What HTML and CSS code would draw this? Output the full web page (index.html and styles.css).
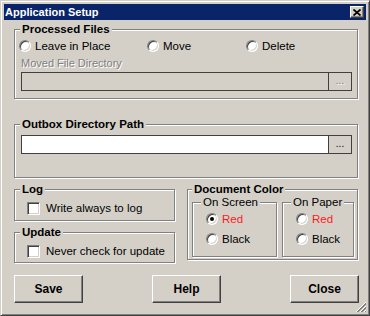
FILE: index.html
```html
<!DOCTYPE html>
<html lang="en">
<head>
<meta charset="UTF-8" />
<title>Application Setup</title>
<link rel="stylesheet" href="styles.css">
</head>
<body>
<div class="window">
  <div class="titlebar">
    <span class="title">Application Setup</span>
    <span class="close-btn">
      <svg width="8" height="7" viewBox="0 0 8 7"><path d="M0.5 0.5L7.5 6.5M7.5 0.5L0.5 6.5" stroke="#000" stroke-width="1.7" fill="none"/></svg>
    </span>
  </div>

  <div class="content">
    <fieldset class="group group-files">
      <legend>Processed Files</legend>
      <div class="radio-row">
        <label class="opt opt-leave"><span class="radio"></span>Leave in Place</label>
        <label class="opt opt-move"><span class="radio"></span>Move</label>
        <label class="opt"><span class="radio"></span>Delete</label>
      </div>
      <div class="field-label disabled">Moved File Directory</div>
      <div class="path-box is-disabled">
        <span class="path-input"></span>
        <span class="browse">...</span>
      </div>
    </fieldset>

    <fieldset class="group group-outbox">
      <legend>Outbox Directory Path</legend>
      <div class="path-box">
        <span class="path-input"></span>
        <span class="browse">...</span>
      </div>
    </fieldset>

    <div class="lower">
      <div class="col-left">
        <fieldset class="group group-check">
          <legend>Log</legend>
          <label class="check-row"><span class="checkbox"></span>Write always to log</label>
        </fieldset>
        <fieldset class="group group-check group-update">
          <legend>Update</legend>
          <label class="check-row"><span class="checkbox"></span>Never check for update</label>
        </fieldset>
      </div>

      <fieldset class="group group-color">
        <legend>Document Color</legend>
        <div class="color-sets">
          <fieldset class="sub sub-screen">
            <legend>On Screen</legend>
            <label class="opt"><span class="radio checked"></span><span class="red">Red</span></label>
            <label class="opt"><span class="radio"></span>Black</label>
          </fieldset>
          <fieldset class="sub sub-paper">
            <legend>On Paper</legend>
            <label class="opt"><span class="radio"></span><span class="red">Red</span></label>
            <label class="opt"><span class="radio"></span>Black</label>
          </fieldset>
        </div>
      </fieldset>
    </div>

    <div class="buttons">
      <button class="btn">Save</button>
      <button class="btn">Help</button>
      <button class="btn">Close</button>
    </div>
  </div>

  <svg class="grip" width="12" height="12" viewBox="0 0 12 12">
    <path d="M11 1L1 11M11 5L5 11M11 9L9 11" stroke="#fff" stroke-width="1" fill="none"/>
    <path d="M11 2L2 11M11 3L3 11M11 6L6 11M11 7L7 11M11 10L10 11" stroke="#808080" stroke-width="1" fill="none"/>
  </svg>
</div>
</body>
</html>
```

FILE: styles.css
```css
* {
  box-sizing: border-box;
}
body {
  margin: 0;
  font-family: "Liberation Sans", Arial, sans-serif;
  font-size: 11.5px;
  color: #000;
}
.window {
  position: relative;
  width: 370px;
  height: 316px;
  background: #d4d0c8;
  border: 1px solid;
  border-color: #d4d0c8 #404040 #404040 #d4d0c8;
  box-shadow: inset 1px 1px #fff, inset -1px -1px #808080;
  padding: 3px;
}
.titlebar {
  height: 16px;
  background: #0a246a;
  color: #fff;
  font-weight: bold;
  font-size: 11px;
  display: flex;
  align-items: center;
  justify-content: space-between;
  padding: 0 2px 0 1px;
}
.close-btn {
  width: 14px;
  height: 12px;
  background: #d4d0c8;
  border: 1px solid;
  border-color: #fff #404040 #404040 #fff;
  box-shadow: inset -1px -1px #808080;
  display: flex;
  align-items: center;
  justify-content: center;
}
.close-btn svg {
  display: block;
}

.content {
  padding: 2px 8px 0 10px;
}

/* etched group boxes */
fieldset {
  margin: 0;
  min-width: 0;
  border: 1px solid #808080;
  box-shadow: inset 1px 1px #fff, 1px 1px #fff;
}
legend {
  background: #d4d0c8;
  font-weight: bold;
  line-height: 14px;
  padding: 0 2px;
  margin-left: -1px;
}
.group {
  padding: 2px 5px 7px 6px;
}
.group-outbox {
  margin-top: 18px;
  padding-bottom: 23px;
}

.radio-row {
  display: flex;
  height: 16px;
  margin-left: -2px;
}
.opt {
  display: flex;
  align-items: center;
  height: 16px;
}
.opt-leave {
  width: 128px;
}
.opt-move {
  width: 99px;
}
.radio {
  width: 12px;
  height: 12px;
  margin-right: 4px;
  border-radius: 50%;
  background: #fff;
  border: 1px solid;
  border-color: #808080 #fff #fff #808080;
  box-shadow: inset 1px 1px #404040, inset -1px -1px #d4d0c8;
  display: flex;
  align-items: center;
  justify-content: center;
}
.radio.checked::after {
  content: "";
  width: 4px;
  height: 4px;
  border-radius: 50%;
  background: #000;
}
.red {
  color: #ff1a1a;
}

.field-label {
  margin-top: 3px;
  line-height: 13px;
  font-size: 11px;
}
.disabled,
.is-disabled .browse {
  color: #808080;
  text-shadow: 1px 1px #fff;
}
.path-box {
  display: flex;
  height: 19px;
  margin-top: 2px;
  border: 1px solid #404040;
  background: #fff;
}
.is-disabled {
  background: #d4d0c8;
}
.path-input {
  flex: 1;
}
.browse {
  width: 23px;
  border-left: 1px solid #404040;
  background: #d4d0c8;
  font-size: 10px;
  line-height: 15px;
  text-align: center;
}

.lower {
  display: flex;
  align-items: flex-start;
  gap: 12px;
  margin-top: 4px;
}
.col-left {
  width: 161px;
}
.group-check {
  padding: 4px 5px 4px 6px;
}
.group-update {
  margin-top: 4px;
  padding-bottom: 3px;
}
.check-row {
  display: flex;
  align-items: center;
  height: 16px;
  margin-left: 6px;
}
.checkbox {
  width: 13px;
  height: 13px;
  margin-right: 6px;
  background: #fff;
  border: 1px solid;
  border-color: #808080 #fff #fff #808080;
  box-shadow: inset 1px 1px #404040, inset -1px -1px #d4d0c8;
}

.group-color {
  width: 171px;
  padding: 0 3px 2px 4px;
}
.group-color > legend {
  margin-left: 0;
}
.color-sets {
  display: flex;
  gap: 5px;
}
.sub {
  padding: 2px 2px 9px 5px;
}
.sub legend {
  font-weight: normal;
  line-height: 13px;
  margin-left: 3px;
}
.sub .opt {
  margin-left: 8px;
}
.sub .opt + .opt {
  margin-top: 4px;
}
.sub-screen {
  width: 85px;
}
.sub-paper {
  width: 72px;
}

.buttons {
  display: flex;
  justify-content: space-between;
  margin-top: 12px;
  margin-right: -1px;
}
.btn {
  width: 69px;
  height: 28px;
  padding: 0;
  background: #d4d0c8;
  border: 1px solid;
  border-color: #fff #404040 #404040 #fff;
  box-shadow: inset -1px -1px #808080;
  font-family: "Liberation Sans", Arial, sans-serif;
  font-size: 12px;
  font-weight: bold;
  color: #000;
}

.grip {
  position: absolute;
  right: 2px;
  bottom: 2px;
}
```
